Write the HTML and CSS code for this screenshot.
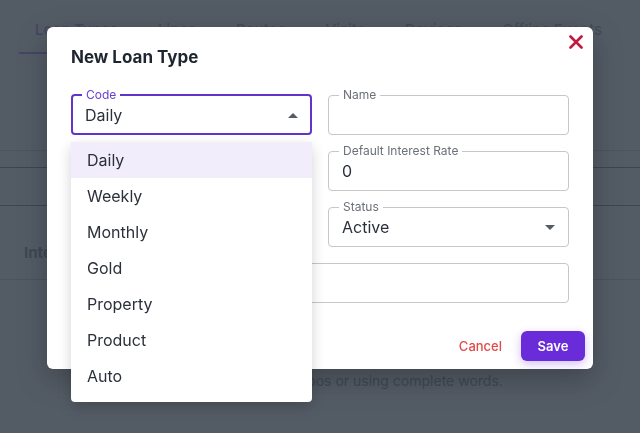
FILE: index.html
```html
<!DOCTYPE html>
<html lang="en">
  <head>
    <meta charset="UTF-8" />
    <meta name="viewport" content="width=device-width, initial-scale=1.0" />
    <title>Loan Types</title>
    <link rel="stylesheet" href="styles.css">
  </head>
  <body>
    <div class="page">
      <nav class="tabs">
        <a class="tab active" href="#">Loan Types</a>
        <a class="tab" href="#">Lines</a>
        <a class="tab" href="#">Routes</a>
        <a class="tab" href="#">Visits</a>
        <a class="tab" href="#">Devices</a>
        <a class="tab" href="#">Offline Events</a>
      </nav>
      <div class="toolbar"></div>
      <div class="filters"></div>
      <div class="search-row"></div>
      <div class="thead">
        <span>Interest Rate</span>
      </div>
      <p class="empty">Try checking for typos or using complete words.</p>
    </div>

    <div class="backdrop">
      <form class="dialog" onsubmit="event.preventDefault();">
        <h2 class="dialog-title">New Loan Type</h2>
        <button type="button" class="close">
          <svg width="14" height="14" viewBox="0 0 14 14">
            <path d="M1.5 1.5 L12.5 12.5 M12.5 1.5 L1.5 12.5" stroke="#c4173f" stroke-width="2.6" stroke-linecap="round" />
          </svg>
        </button>

        <div class="fields">
          <fieldset class="field focused">
            <legend>Code</legend>
            <div class="value">
              <span>Daily</span>
              <svg class="caret" width="10" height="5" viewBox="0 0 10 5"><path d="M0 5 L5 0 L10 5 Z" fill="#555b63" /></svg>
            </div>
          </fieldset>
          <fieldset class="field">
            <legend>Name</legend>
            <div class="value"></div>
          </fieldset>
          <fieldset class="field">
            <legend>Short Name</legend>
            <div class="value"></div>
          </fieldset>
          <fieldset class="field">
            <legend>Default Interest Rate</legend>
            <div class="value"><span>0</span></div>
          </fieldset>
          <fieldset class="field">
            <legend>Term</legend>
            <div class="value"></div>
          </fieldset>
          <fieldset class="field">
            <legend>Status</legend>
            <div class="value">
              <span>Active</span>
              <svg class="caret" width="10" height="5" viewBox="0 0 10 5"><path d="M0 0 L10 0 L5 5 Z" fill="#555b63" /></svg>
            </div>
          </fieldset>
          <fieldset class="field wide">
            <legend>Description</legend>
            <div class="value"></div>
          </fieldset>
        </div>

        <div class="actions">
          <button type="button" class="btn-cancel">Cancel</button>
          <button type="submit" class="btn-save">Save</button>
        </div>
      </form>

      <ul class="menu">
        <li class="selected">Daily</li>
        <li>Weekly</li>
        <li>Monthly</li>
        <li>Gold</li>
        <li>Property</li>
        <li>Product</li>
        <li>Auto</li>
      </ul>
    </div>
  </body>
</html>
```

FILE: styles.css
```css
* {
  box-sizing: border-box;
  margin: 0;
  padding: 0;
}

body {
  font-family: Inter, "Noto Sans", sans-serif;
  background-color: #ffffff;
  width: 640px;
  height: 433px;
  overflow: hidden;
}

/* page behind the dialog */
.page {
  color: #b9bfc7;
}

.tabs {
  display: flex;
  gap: 8px;
  padding-left: 19px;
  height: 54px;
}

.tab {
  padding: 19px 16px 0;
  font-size: 15px;
  line-height: 22px;
  white-space: nowrap;
  color: #b9bfc7;
  text-decoration: none;
  font-weight: 500;
}

.tab.active {
  border-bottom: 2px solid #c49eff;
  color: #c49eff;
}

.toolbar {
  height: 97px;
  border-bottom: 1px solid #d8dce1;
}

.filters {
  height: 17px;
  border-bottom: 1px solid #9aa1aa;
}

.search-row {
  height: 38px;
  border-bottom: 1px solid #9aa1aa;
}

.thead {
  height: 74px;
  padding: 37px 0 0 24px;
  border-bottom: 1px solid #d8dce1;
  font-weight: 700;
  font-size: 15px;
  color: #a4aab3;
}

.empty {
  margin-top: 92px;
  padding-left: 45px;
  text-align: center;
  font-size: 14px;
  color: #a4aab3;
}

/* dialog */
.backdrop {
  position: fixed;
  inset: 0;
  background-color: rgba(31, 41, 55, 0.77);
  display: flex;
  justify-content: center;
  align-items: flex-start;
  padding-top: 27px;
}

.dialog {
  position: relative;
  width: 546px;
  height: 342px;
  background-color: #ffffff;
  border-radius: 6px;
  box-shadow: 0 10px 30px rgba(0, 0, 0, 0.25);
  padding: 18px 24px 0;
  display: flex;
  flex-direction: column;
}

.dialog-title {
  font-size: 17px;
  line-height: 24px;
  font-weight: 700;
  color: #1f2530;
}

.close {
  position: absolute;
  top: 8px;
  right: 10px;
  width: 14px;
  height: 14px;
  border: none;
  background: none;
  display: flex;
  cursor: pointer;
}

.fields {
  margin-top: 19px;
  display: grid;
  grid-template-columns: 1fr 1fr;
  column-gap: 16px;
  row-gap: 9px;
}

.field {
  min-width: 0;
  border: 1px solid #c4c7cc;
  border-radius: 4px;
  padding: 0 13px 6px 10px;
}

.field legend {
  font-size: 12px;
  line-height: 14px;
  padding: 0 4px;
  color: #6b7079;
}

.field.wide {
  grid-column: 1 / -1;
}

.field.focused {
  border: 2px solid #6334c9;
  padding: 0 12px 5px 9px;
}

.field.focused legend {
  color: #6a3fd0;
}

.value {
  height: 26px;
  padding-left: 3px;
  display: flex;
  align-items: center;
  justify-content: space-between;
  font-size: 16px;
  color: #2b303a;
}

.actions {
  margin-top: auto;
  padding: 8px;
  margin-right: -24px;
  display: flex;
  justify-content: flex-end;
  align-items: center;
  gap: 19px;
}

.btn-cancel {
  border: none;
  background: none;
  font-family: inherit;
  font-size: 13px;
  font-weight: 500;
  color: #e24a4a;
  cursor: pointer;
}

.btn-save {
  width: 64px;
  height: 30px;
  border: none;
  border-radius: 6px;
  background-color: #6a2bd9;
  color: #ffffff;
  font-family: inherit;
  font-size: 13px;
  font-weight: 600;
  box-shadow: 0 3px 10px rgba(106, 43, 217, 0.3);
  cursor: pointer;
}

/* select popover */
.menu {
  position: absolute;
  left: 71px;
  top: 142px;
  width: 241px;
  list-style: none;
  background-color: #ffffff;
  border-radius: 4px;
  padding-bottom: 8px;
  box-shadow: 0 5px 14px rgba(0, 0, 0, 0.18);
}

.menu li {
  height: 36px;
  line-height: 36px;
  padding-left: 16px;
  font-size: 16px;
  color: #2b303a;
}

.menu li.selected {
  background-color: #f1edfa;
}
```
